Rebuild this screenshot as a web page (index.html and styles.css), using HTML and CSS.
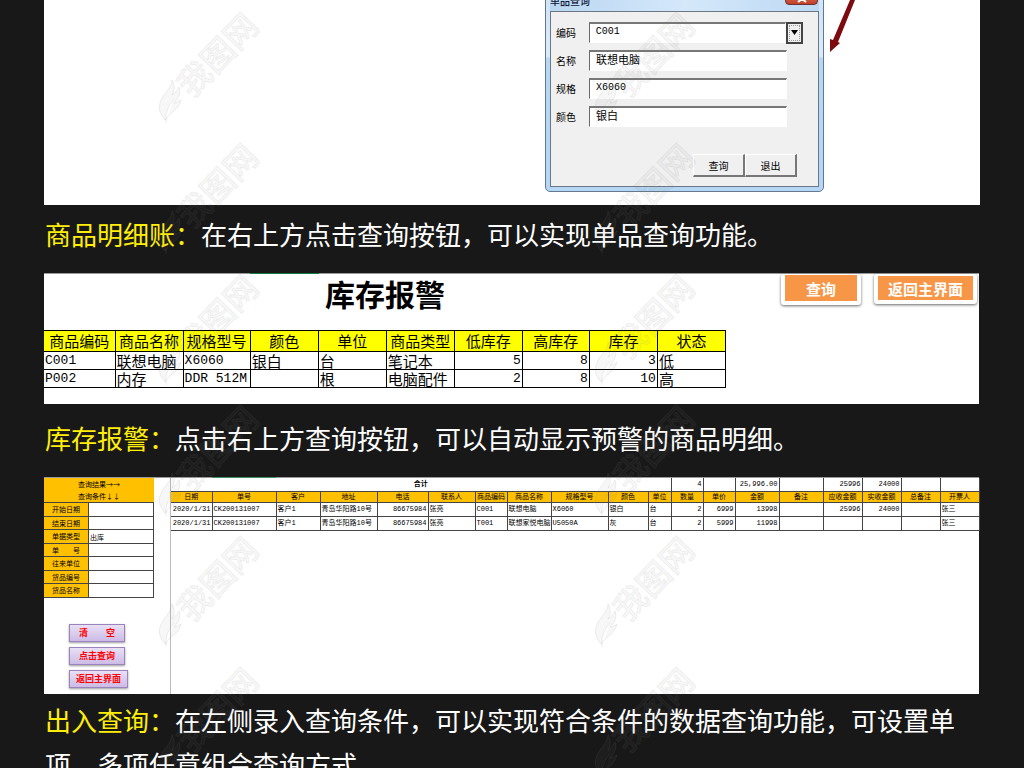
FILE: index.html
```html
<!DOCTYPE html>
<html lang="zh-CN">
<head>
<meta charset="utf-8">
<title>进销存功能介绍</title>
<link rel="stylesheet" href="styles.css">
</head>
<body>
<main class="page">

  <section class="shot shot-detail">
    <form class="dialog">
      <header class="dialog-bar">
        <span class="dialog-title">单品查询</span>
        <button type="button" class="dialog-close" aria-label="关闭">
          <svg width="12" height="8" viewBox="0 0 12 8"><path d="M2 1l8 6M10 1L2 7" stroke="#fff" stroke-width="2"/></svg>
        </button>
      </header>
      <div class="dialog-body">
        <div class="field"><label for="f-code">编码</label><input id="f-code" class="latin" value="C001"><button type="button" class="drop" aria-label="选择编码"><svg width="7" height="5" viewBox="0 0 7 5"><path d="M0 0h7L3.500 5z"/></svg></button></div>
        <div class="field"><label for="f-name">名称</label><input id="f-name" value="联想电脑"></div>
        <div class="field"><label for="f-spec">规格</label><input id="f-spec" class="latin" value="X6060"></div>
        <div class="field"><label for="f-color">颜色</label><input id="f-color" value="银白"></div>
        <div class="dialog-actions"><button type="button">查询</button><button type="button">退出</button></div>
      </div>
    </form>
    <svg class="arrow" width="40" height="68" viewBox="0 0 40 68"><path d="M21 14L4 54 1 53 1 66 11 57 9 56 26 14z" fill="#7d0a0e"/></svg>
  </section>
  <p class="caption caption-detail"><b>商品明细账：</b>在右上方点击查询按钮，可以实现单品查询功能。</p>

  <section class="shot shot-alarm">
    <div class="alarm-main">
      <h2>库存报警</h2>
      <table class="stock">
        <colgroup><col class="c71"><col class="c68"><col class="c67"><col class="c68"><col class="c68"><col class="c68"><col class="c68"><col class="c67"><col class="c68"><col class="c68"></colgroup>
        <thead><tr><th>商品编码</th><th>商品名称</th><th>规格型号</th><th>颜色</th><th>单位</th><th>商品类型</th><th>低库存</th><th>高库存</th><th>库存</th><th>状态</th></tr></thead>
        <tbody>
          <tr><td class="latin">C001</td><td>联想电脑</td><td class="latin">X6060</td><td>银白</td><td>台</td><td>笔记本</td><td class="latin num">5</td><td class="latin num">8</td><td class="latin num">3</td><td>低</td></tr>
          <tr><td class="latin">P002</td><td>内存</td><td class="latin">DDR 512M</td><td></td><td>根</td><td>电脑配件</td><td class="latin num">2</td><td class="latin num">8</td><td class="latin num">10</td><td>高</td></tr>
        </tbody>
      </table>
    </div>
    <div class="alarm-actions"><button type="button">查询</button><button type="button">返回主界面</button></div>
  </section>
  <p class="caption caption-alarm"><b>库存报警：</b>点击右上方查询按钮，可以自动显示预警的商品明细。</p>

  <section class="shot shot-query">
    <aside class="criteria">
      <div class="criteria-head"><div>查询结果→→</div><div>查询条件↓↓</div></div>
      <div class="criterion"><label for="q1">开始日期</label><input id="q1"></div>
      <div class="criterion"><label for="q2">结束日期</label><input id="q2"></div>
      <div class="criterion"><label for="q3">单据类型</label><input id="q3" value="出库"></div>
      <div class="criterion"><label for="q4">单　　号</label><input id="q4"></div>
      <div class="criterion"><label for="q5">往来单位</label><input id="q5"></div>
      <div class="criterion"><label for="q6">货品编号</label><input id="q6"></div>
      <div class="criterion"><label for="q7">货品名称</label><input id="q7"></div>
      <div class="criteria-actions"><button type="button">清　　空</button><button type="button">点击查询</button><button type="button" class="wide">返回主界面</button></div>
    </aside>
    <div class="results">
      <table class="ledger">
        <colgroup><col class="c41"><col class="c64"><col class="c44"><col class="c57"><col class="c51"><col class="c47"><col class="c32"><col class="c44"><col class="c57"><col class="c40"><col class="c23"><col class="c32"><col class="c32"><col class="c44"><col class="c44"><col class="c39"><col class="c39"><col class="c39"><col class="c39"></colgroup>
        <thead>
          <tr class="total"><td colspan="11" class="sum">合计</td><td class="num">4</td><td></td><td class="num">25,996.00</td><td></td><td class="num">25996</td><td class="num">24000</td><td></td><td></td></tr>
          <tr><th>日期</th><th>单号</th><th>客户</th><th>地址</th><th>电话</th><th>联系人</th><th>商品编码</th><th>商品名称</th><th>规格型号</th><th>颜色</th><th>单位</th><th>数量</th><th>单价</th><th>金额</th><th>备注</th><th>应收金额</th><th>实收金额</th><th>总备注</th><th>开票人</th></tr>
        </thead>
        <tbody>
          <tr><td class="num">2020/1/31</td><td>CK200131007</td><td>客户1</td><td>青岛华阳路10号</td><td class="num">86675984</td><td>张亮</td><td>C001</td><td>联想电脑</td><td>X6060</td><td>银白</td><td>台</td><td class="num">2</td><td class="num">6999</td><td class="num">13998</td><td></td><td class="num">25996</td><td class="num">24000</td><td></td><td>张三</td></tr>
          <tr><td class="num">2020/1/31</td><td>CK200131007</td><td>客户1</td><td>青岛华阳路10号</td><td class="num">86675984</td><td>张亮</td><td>T001</td><td>联想家悦电脑</td><td>U5050A</td><td>灰</td><td>台</td><td class="num">2</td><td class="num">5999</td><td class="num">11998</td><td></td><td></td><td></td><td></td><td>张三</td></tr>
        </tbody>
      </table>
    </div>
  </section>
  <p class="caption caption-query"><b>出入查询：</b>在左侧录入查询条件，可以实现符合条件的数据查询功能，可设置单项、多项任意组合查询方式。</p>

  <svg width="0" height="0" class="defs" aria-hidden="true">
    <symbol id="mark" viewBox="0 0 110 120">
      <path d="M14 74c0 8-10 15-12 23-2 7 1 12 5 17 5-8 13-9 16-20-3 2-5 3-7 3 5-5 7-10 5-16-2 4-4 6-7 8 3-5 3-10 0-15zM8 117c-1-8 1-16 8-24"/>
      <text transform="translate(34 93) rotate(-46)">我图网</text>
    </symbol>
  </svg>
  <div class="marks" aria-hidden="true">
    <svg><use href="#mark"/></svg><svg><use href="#mark"/></svg>
    <svg><use href="#mark"/></svg><svg><use href="#mark"/></svg>
    <svg><use href="#mark"/></svg><svg><use href="#mark"/></svg>
    <svg><use href="#mark"/></svg><svg><use href="#mark"/></svg>
    <svg><use href="#mark"/></svg><svg><use href="#mark"/></svg>
    <svg><use href="#mark"/></svg><svg><use href="#mark"/></svg>
  </div>
</main>
</body>
</html>
```
FILE: styles.css
```css
* { box-sizing: border-box; }
body {
  margin: 0;
  background: #181818;
  color: #000;
  font-family: "Noto Sans CJK SC", sans-serif;
}
button, input { font: inherit; margin: 0; padding: 0; border-radius: 0; color: inherit; min-width: 0; }
.page { position: relative; padding: 0 44px; overflow: hidden; }
.shot { background: #fff; }
.latin { font-family: "Liberation Mono", "Noto Sans CJK SC", monospace; }
.num { text-align: right; }

/* captions */
.caption { margin: 0; padding: 0 16px 0 1px; color: #fff; font-size: 26px; line-height: 44px; }
.caption b { color: #ffee0a; font-weight: 400; }
.caption-detail { padding-top: 7px; padding-bottom: 17px; }
.caption-alarm { padding-top: 12px; padding-bottom: 17px; }
.caption-query { padding-top: 4px; }

/* item query dialog */
.shot-detail { display: flex; justify-content: flex-end; gap: 5px; margin-top: -14px; padding: 0 111px 13px 0; }
.dialog {
  width: 279px;
  padding: 0 4px 4px;
  border: 1px solid #63788c;
  border-radius: 5px;
  background: linear-gradient(#cfe3f8, #d9ebfb 34%, #b7d8f5 35%, #b5d6f4);
  font-size: 10px;
}
.dialog-bar { display: flex; justify-content: space-between; align-items: flex-start; height: 24px; background: linear-gradient(90deg, #b9d6f1, #d5e8fa 50%, #bcd9f3); }
.dialog-title { padding-top: 6px; line-height: 16px; font-weight: 500; color: #101838; }
.dialog-close { width: 33px; height: 18px; margin-right: 1px; padding-top: 5px; border: 1px solid #6e3030; border-radius: 0 0 4px 4px; background: linear-gradient(#e0937f, #c33f27); line-height: 0; }
.dialog-body { padding: 10px 15px 9px 5px; border: 1px solid #6b7883; background: #f0f0f0; }
.field { display: flex; align-items: center; height: 21px; margin-bottom: 7px; }
.field label { width: 33px; }
.field input { width: 198px; height: 21px; padding: 0 6px 5px; border: 1px solid #fff; border-top: 2px solid #777; border-left: 1px solid #696969; background: #fff; font-size: 11px; }
.field .latin { padding-bottom: 3px; font-size: 10px; }
.drop { display: grid; place-items: center; width: 17px; height: 22px; border: 2px solid #444; outline: 1px dotted #999; outline-offset: -4px; background: #f0f0f0; }
.dialog-actions { display: flex; justify-content: flex-end; margin: 27px 6px 0 0; }
.dialog-actions button { width: 52px; height: 23px; border: 1px solid #fff; border-right: 2px solid #777; border-bottom: 2px solid #777; background: #f0f0f0; }
.arrow { flex: none; }

/* stock alarm */
.shot-alarm {
  display: flex;
  justify-content: space-between;
  margin-right: 1px;
  padding: 1px 0 16px;
  background: linear-gradient(90deg, #999 206px, #107c41 206px 275px, #999 275px) top / 100% 1px no-repeat #fff;
}
.alarm-main { width: 682px; }
.alarm-main h2 { margin: 0; height: 56px; font-size: 30px; line-height: 38px; text-align: center; }
.stock { width: 100%; table-layout: fixed; border-collapse: collapse; font-size: 15px; }
.stock th, .stock td { height: 18px; padding: 0 1px; border: 1px solid #000; line-height: 17px; white-space: nowrap; font-weight: 400; }
.stock th { height: 21px; padding: 0; background: #ff0; line-height: 20px; }
.stock .latin { font-size: 13px; }
.stock tr > :first-child { border-left: 0; }
.alarm-actions { display: flex; align-items: flex-start; gap: 13px; padding-right: 2px; }
.alarm-actions button { height: 31px; border: 4px solid #fff; border-top-width: 1px; border-radius: 3px; background: #f79646; background-clip: padding-box; box-shadow: 0 1px 3px #0009; color: #fff; font-size: 15px; font-weight: 700; line-height: 25px; }
.alarm-actions button:first-child { padding: 0 21px; }
.alarm-actions button:last-child { height: 30px; padding: 0 10px; border-top-width: 2px; }

/* in/out query */
.shot-query {
  display: flex;
  margin-right: 1px;
  padding-top: 1px;
  background: linear-gradient(90deg, #999 168px, #3f8f68 168px 232px, #999 232px) top / 100% 1px no-repeat #fff;
  font-size: 7px;
  line-height: 10px;
}
.criteria { width: 110px; margin-right: 16px; }
.criteria-head { height: 25px; background: #ffc000; line-height: 12px; text-align: center; border-bottom: 1px solid #444; }
.criterion { display: flex; height: 14px; border-bottom: 1px solid #444; }
.criterion:nth-child(odd) { height: 13px; }
.criterion label { width: 45px; background: #ffc000; border-right: 1px solid #444; line-height: 12px; text-align: center; }
.criterion input { flex: 1; padding: 0 1px; border: 0; border-right: 1px solid #444; background: #fff; }
.criteria-actions { display: flex; flex-direction: column; align-items: flex-start; gap: 5px; padding: 26px 0 6px 25px; }
.criteria-actions button { width: 56px; height: 18px; border: 1px solid #9a84bd; background: linear-gradient(#e9e0f5, #cdbbe6); box-shadow: 0 1px 2px #0006; color: #f00; font-size: 9px; font-weight: 700; line-height: 14px; }
.criteria-actions .wide { width: 59px; }
.results { flex: 1; border-left: 1px solid #bbb; }
.ledger { width: 100%; table-layout: fixed; border-collapse: collapse; font-family: "Liberation Mono", "Noto Sans CJK SC", monospace; }
.ledger td, .ledger th { height: 14px; padding: 0 1px; border: 1px solid #444; line-height: 10px; white-space: nowrap; overflow: hidden; font-weight: 400; }
.ledger th { height: 11px; padding: 0; background: #ffc000; }
.ledger .total td { height: 13px; border-top: 0; }
.ledger .sum { text-align: center; font-weight: 700; }
.ledger tr > :first-child { border-left: 0; }

.c23 { width: 23px; } .c32 { width: 32px; } .c39 { width: 39px; } .c40 { width: 40px; }
.c41 { width: 41px; } .c44 { width: 44px; } .c47 { width: 47px; } .c51 { width: 51px; }
.c57 { width: 57px; } .c64 { width: 64px; } .c67 { width: 67px; } .c68 { width: 68px; } .c71 { width: 71px; }

/* tiled watermark */
.defs { position: absolute; }
.marks { position: absolute; top: 6px; left: 158px; display: grid; grid-template-columns: 436px 436px; grid-auto-rows: 131px; pointer-events: none; }
.marks svg { width: 110px; height: 120px; fill: #80808010; stroke: #80808020; stroke-width: 1px; overflow: visible; }
#mark text { font-size: 33px; font-weight: 500; }
```
